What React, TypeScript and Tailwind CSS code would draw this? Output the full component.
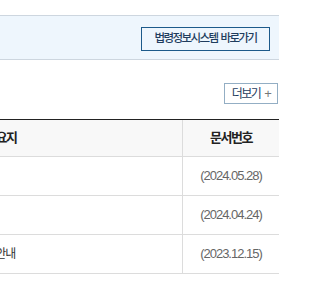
const rows = [
  { title: '정보공개 운영 계획', date: '(2024.05.28)' },
  { title: '행정정보 공표 목록', date: '(2024.04.24)' },
  { title: '정보공개 처리 절차 변경에 따른 안내', date: '(2023.12.15)' },
];

export default function App() {
  return (
    <div className="w-[319px] h-[292px] overflow-hidden bg-white font-['Liberation_Sans','Noto_Sans_CJK_KR',sans-serif] tracking-[-1px] text-[#333]">
      <div className="w-[279px] pt-[15px]">
        <div className="h-[45px] border-y border-[#cdd6df] bg-[#eef6fd] flex justify-end items-start pt-[11px] pr-[9px]">
          <button className="h-[24px] w-[129px] border border-[#1c5a8a] text-[11.5px] tracking-[-1.6px] font-medium text-[#1f3d5e] leading-none flex items-center justify-center gap-[3px]">
            <span>법령정보시스템</span>
            <span>바로가기</span>
          </button>
        </div>

        <div className="mt-[23px] flex justify-end pr-px">
          <button className="h-[21px] w-[54px] border border-[#93aec4] text-[12px] tracking-[-1.5px] text-[#1f3d5e] leading-none flex items-center justify-center gap-[4px]">
            더보기 <span className="text-[#777] text-[13px]">+</span>
          </button>
        </div>

        <div className="mt-[15px] -ml-[170px] w-[449px]">
          <div className="border-t border-[#222] bg-[#f8f8f8] border-b border-b-[#dcdcdc] flex h-[38px] text-[13px] tracking-[-1.5px] font-bold text-[#222]">
            <div className="w-[353px] flex items-center justify-center border-r border-[#dcdcdc]">요지</div>
            <div className="flex-1 flex items-center justify-center">문서번호</div>
          </div>
          {rows.map(r => (
            <div key={r.date} className="flex h-[39px] border-b border-[#dcdcdc] text-[12px]">
              <div className="w-[353px] flex items-center pl-[23px] border-r border-[#dcdcdc] whitespace-nowrap">
                {r.title}
              </div>
              <div className="flex-1 flex items-center justify-center text-[13px] text-[#666]">{r.date}</div>
            </div>
          ))}
        </div>
      </div>
    </div>
  );
}
